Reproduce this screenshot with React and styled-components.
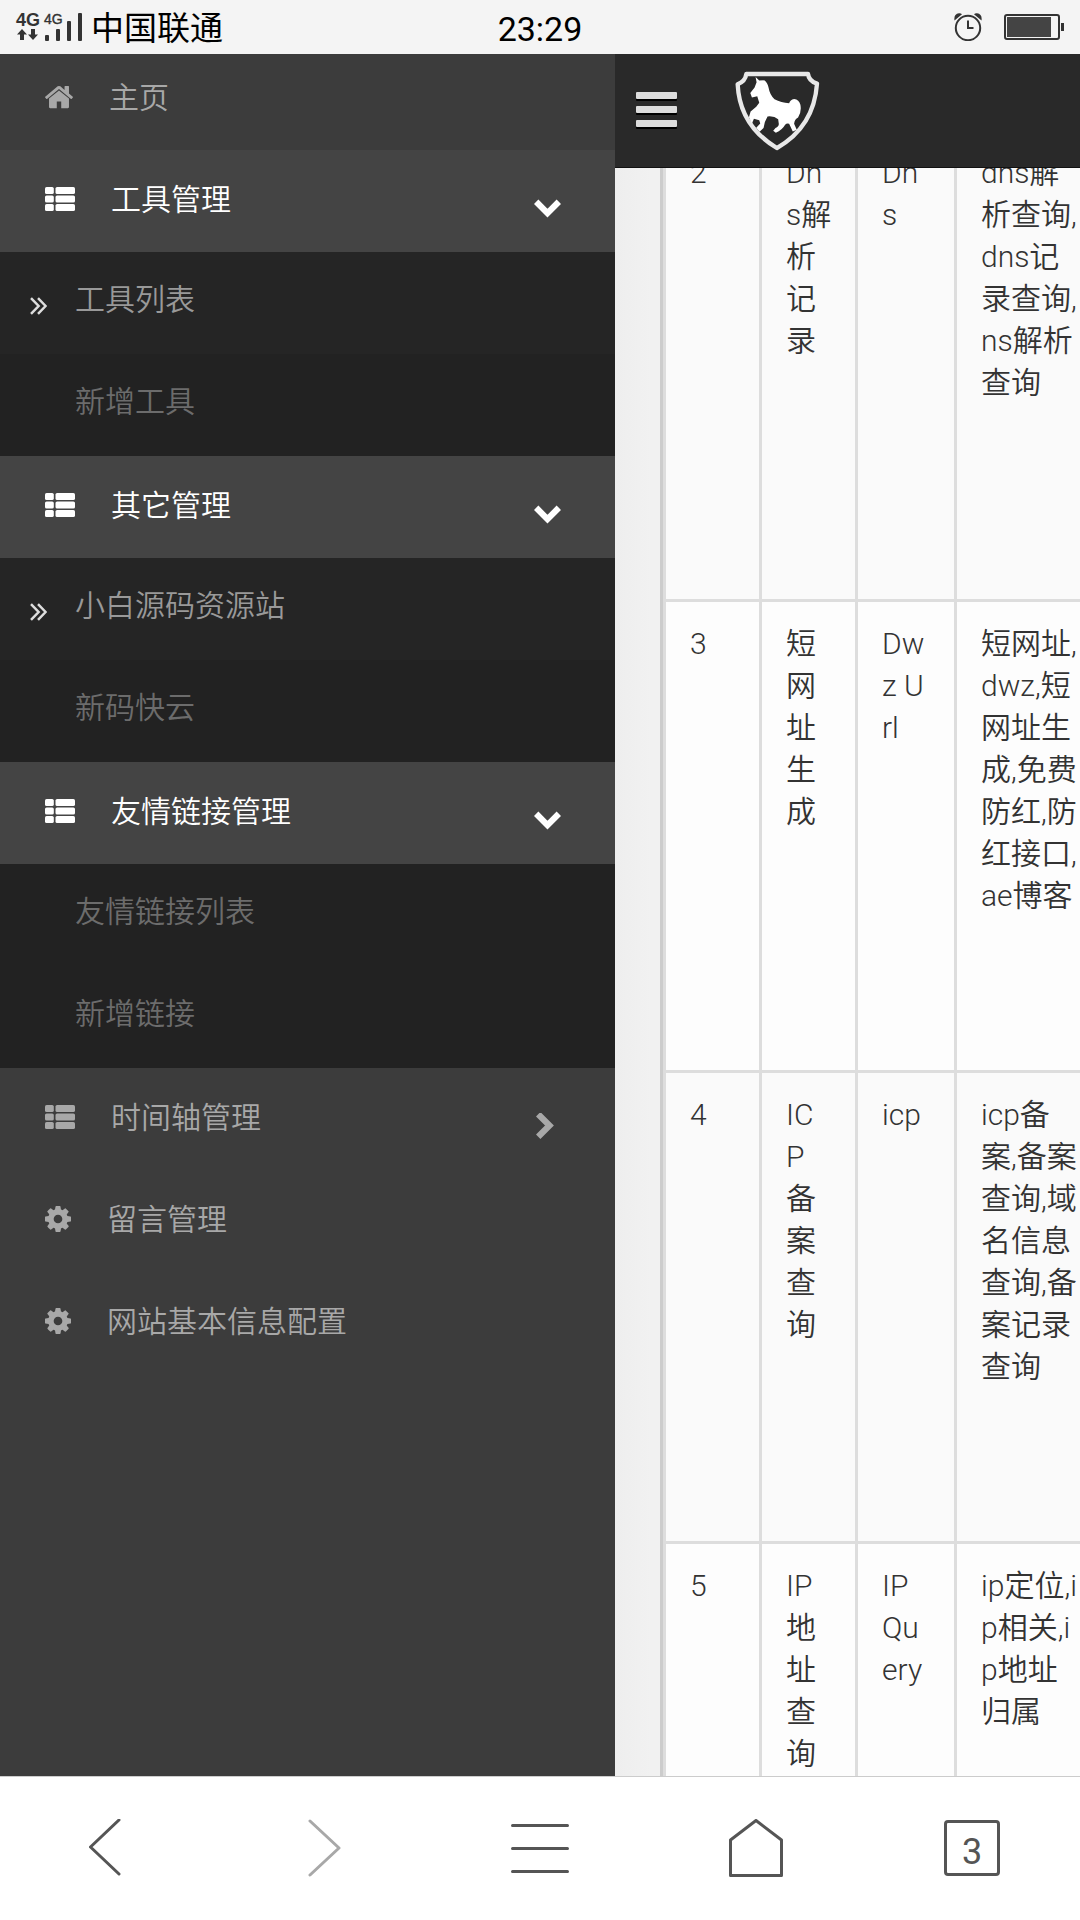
import React, { useState } from 'react';
import styled, { createGlobalStyle } from 'styled-components';

const GlobalStyle = createGlobalStyle`
	* {
		box-sizing: border-box;
	}
	body {
		margin: 0;
		background: #fff;
		font-family: Roboto, 'Noto Sans CJK SC', sans-serif;
		font-size: 30px;
		font-weight: 350;
		line-height: 42px;
		color: #333;
	}
	button {
		padding: 0;
		border: 0;
		background: none;
		font: inherit;
		color: inherit;
		text-align: left;
		cursor: pointer;
	}
	a {
		color: inherit;
		text-decoration: none;
	}
	svg {
		display: block;
		flex: none;
	}
`;

const Page = styled.div`
	display: flex;
	flex-direction: column;
	height: 100vh;
	overflow: hidden;
`;

const StatusBar = styled.header`
	display: grid;
	grid-template-columns: 1fr auto 1fr;
	align-items: center;
	height: 54px;
	padding: 0 16px;
	background: #f4f4f4;
	color: #000;
`;
const Carrier = styled.div`
	display: flex;
	align-items: center;
	gap: 8px;
	font-size: 33px;
	font-weight: 400;
`;
const CarrierName = styled.span`
	padding-top: 4px;
`;
const Clock = styled.time`
	padding-top: 4px;
	font-size: 34px;
	font-weight: 400;
`;
const StatusIcons = styled.div`
	display: flex;
	align-items: center;
	justify-content: flex-end;
	gap: 22px;
`;

const Body = styled.div`
	display: grid;
	grid-template-columns: 615px 1fr;
	flex: 1;
	min-height: 0;
`;

const Sidebar = styled.nav`
	overflow: hidden;
	background: #3c3c3c;
	color: #a8a8a8;
`;
const MenuList = styled.ul`
	margin: -6px 0 0;
	padding: 0;
	list-style: none;
`;
const SubList = styled.ul`
	margin: 0;
	padding: 0;
	list-style: none;
	background: #222;
	color: #6c6c6c;
`;
const MenuRow = styled.a`
	display: flex;
	align-items: center;
	gap: 36px;
	width: 100%;
	height: 102px;
	padding: 0 54px 4px 45px;
	background: ${p => (p.$open ? '#444' : 'transparent')};
	color: ${p => (p.$open ? '#fff' : 'inherit')};
`;
const MenuLabel = styled.span`
	padding-top: 2px;
`;
const ArrowSlot = styled.span`
	margin-left: auto;
	padding-top: 18px;
`;
const SubRow = styled.a`
	display: flex;
	align-items: center;
	height: 102px;
	padding: 0 0 7px 30px;
	background: ${p => (p.$marked ? '#252525' : 'transparent')};
	color: ${p => (p.$marked ? '#999' : 'inherit')};
`;
const Marker = styled.span`
	width: 45px;
	padding-top: 12px;
	color: #ddd;
`;

const Main = styled.main`
	display: flex;
	flex-direction: column;
	min-width: 0;
	min-height: 0;
`;
const TopBar = styled.div`
	display: flex;
	align-items: center;
	flex: none;
	gap: 57px;
	height: 114px;
	padding-left: 21px;
	border-bottom: 1px solid #111;
	background: #292929;
`;
const Toggle = styled.button`
	display: flex;
	flex-direction: column;
	gap: 7px;
	width: 41px;
	padding-bottom: 2px;
`;
const ToggleBar = styled.span`
	height: 7px;
	border-radius: 1px;
	background: #ddd;
	box-shadow: 0 2px 0 #000;
`;
const Content = styled.div`
	flex: 1;
	min-height: 0;
	padding-left: 45px;
	overflow: hidden;
	background: linear-gradient(to right, #eee, #f1f1f1 36px);
`;
const ToolTable = styled.table`
	width: 600px;
	margin-top: -37px;
	border-left: 3px solid #ccc;
	border-collapse: separate;
	border-spacing: 0;
	table-layout: fixed;
`;
const Row = styled.tr`
	height: 471px;
	background: #fafafa;

	&:nth-child(even) {
		background: #fdfdfd;
	}
`;
const Cell = styled.td`
	width: ${p => p.$width}px;
	padding: 21px 0 24px 24px;
	border-left: 3px solid #ddd;
	border-bottom: 3px solid #ddd;
	vertical-align: top;
	white-space: pre;
`;

const BottomBar = styled.nav`
	display: grid;
	grid-template-columns: repeat(5, 1fr);
	flex: none;
	height: 144px;
	padding-bottom: 2px;
	border-top: 1px solid #ccc;
	background: #fff;
	color: #555;
`;
const BottomButton = styled.button`
	display: flex;
	align-items: center;
	justify-content: center;
	color: ${p => (p.disabled ? '#a8a8a8' : '#555')};
`;
const TabCount = styled.span`
	width: 56px;
	height: 56px;
	padding-top: 8px;
	border: 3px solid #555;
	border-radius: 4px;
	font-size: 36px;
	font-weight: 400;
	text-align: center;
`;

const HomeIcon = () => (
	<svg width="28" height="24" viewBox="24 200 1616 1385" fill="currentColor">
		<path d="M1408 992v480q0 26-19 45t-45 19h-384v-384h-256v384h-384q-26 0-45-19t-19-45v-480q0-1 .5-3t.5-3l575-474 575 474q1 2 1 6zm223-69l-62 74q-8 9-21 11h-3q-13 0-21-7l-692-577-692 577q-12 8-24 7-13-2-21-11l-62-74q-8-10-7-23.5t11-21.5l719-599q32-26 76-26t76 26l244 204v-195q0-14 9-23t23-9h192q14 0 23 9t9 23v408l219 182q10 8 11 21.5t-7 23.5z" />
	</svg>
);

const ListIcon = () => (
	<svg width="30" height="24" viewBox="0 0 30 24" fill="currentColor">
		{[0, 8.5, 17].map(y => (
			<React.Fragment key={y}>
				<rect x="0" y={y} width="8.8" height="7" rx="1.6" />
				<rect x="10.5" y={y} width="19.5" height="7" rx="1.6" />
			</React.Fragment>
		))}
	</svg>
);

const CogIcon = () => (
	<svg width="26" height="26" viewBox="0 128 1536 1536" fill="currentColor">
		<path d="M1024 896q0-106-75-181t-181-75-181 75-75 181 75 181 181 75 181-75 75-181zm512-109v222q0 12-8 23t-20 13l-185 28q-19 54-39 91 35 50 107 138 10 12 10 25t-9 23q-27 37-99 108t-94 71q-12 0-26-9l-138-108q-44 23-91 38-16 136-29 186-7 28-36 28h-222q-14 0-24.5-8.5t-11.5-21.5l-28-184q-49-16-90-37l-141 107q-10 9-25 9-14 0-25-11-126-114-165-168-7-10-7-23 0-12 8-23 15-21 51-66.5t54-70.5q-27-50-41-99l-183-27q-13-2-21-12.5t-8-23.5v-222q0-12 8-23t19-13l186-28q14-46 39-92-40-57-107-138-10-12-10-24 0-10 9-23 26-36 98.5-107.5t94.5-71.5q13 0 26 10l138 107q44-23 91-38 16-136 29-186 7-28 36-28h222q14 0 24.5 8.5t11.5 21.5l28 184q49 16 90 37l142-107q9-9 24-9 13 0 25 10 129 119 165 170 7 8 7 22 0 12-8 23-15 21-51 66.5t-54 70.5q26 50 41 98l183 28q13 2 21 12.5t8 23.5z" />
	</svg>
);

const Chevron = ({ open }) => (
	<svg width="27" height="27" viewBox="0 0 27 27" fill="none" stroke="currentColor" strokeWidth="6.2">
		<path d={open ? 'M2.2 6.8L13.5 18.1L24.8 6.8' : 'M4.2 2.2L15.5 13.5L4.2 24.8'} transform={open ? undefined : 'translate(0 -1)'} />
	</svg>
);

const DoubleAngle = () => (
	<svg width="17" height="18" viewBox="0 0 17 18" fill="none" stroke="currentColor" strokeWidth="2.5">
		<path d="M1 1.2L8.6 9L1 16.8M8 1.2L15.6 9L8 16.8" />
	</svg>
);

const SignalIcon = () => (
	<svg
		width="67"
		height="30"
		viewBox="0 0 67 30"
		overflow="visible"
		fill="#333"
		fontFamily="Liberation Sans, sans-serif"
		fontWeight="700"
	>
		<text x="0" y="14" fontSize="18">
			4G
		</text>
		<text x="28" y="12" fontSize="14" fontWeight="400" stroke="#333" strokeWidth=".4">
			4G
		</text>
		<path d="M6 17L11 22.500H8V28H4V22.500H1ZM17 28L12 22.500H15V17H19V22.500H22Z" />
		<rect x="29" y="23" width="4" height="6" rx="1" />
		<rect x="40" y="17" width="4" height="12" rx="1" />
		<rect x="51" y="9" width="4" height="20" rx="1" />
		<rect x="62" y="1" width="4" height="28" rx="1" />
	</svg>
);

const AlarmIcon = () => (
	<svg width="28" height="28" viewBox="0 0 28 28" fill="none" stroke="#333" strokeWidth="2">
		<path d="M.5 7.500Q-.5 1 5 .3Q7 .2 8 1.300ZM27.500 7.500Q28.500 1 23 .3Q21 .2 20 1.300Z" fill="#333" stroke="none" />
		<circle cx="14" cy="15" r="12.2" />
		<path d="M14 7.500V15H19.500" />
	</svg>
);

const BatteryIcon = () => (
	<svg width="60" height="26" viewBox="0 0 60 26" fill="#444">
		<rect x="1" y="1" width="54" height="24" rx="2" fill="none" stroke="#333" strokeWidth="2" />
		<rect x="3" y="3" width="44" height="20" />
		<rect x="57" y="9" width="3" height="8" fill="#333" />
	</svg>
);

// white horse on a shield
const Logo = () => (
	<svg width="87" height="83" viewBox="372 60 260 250">
		<path
			d="M408 75H594Q596 96 621 104Q612 234 500 298Q388 230 382 106Q405 97 408 75Z"
			fill="none"
			stroke="#e8e8e8"
			strokeWidth="13"
			strokeLinejoin="round"
		/>
		<path
			d="M436 84L447 95L462 94Q472 101 475 116Q479 139 493 151Q513 162 537 163Q540 152 552 150Q567 151 571 168Q575 190 564 206Q554 210 552 225L560 243L548 248L537 225Q530 222 525 228Q516 244 497 252L489 246L496 238Q506 234 506 226L504 211Q492 201 472 203L464 220L460 238L448 249L438 237L450 224L447 214L431 210L425 224L416 205L421 188L438 174L447 162L441 142L425 146L420 132L433 116L439 100Z"
			fill="#fff"
		/>
	</svg>
);

const menu = [
	{ label: '主页', icon: HomeIcon },
	{
		label: '工具管理',
		icon: ListIcon,
		open: true,
		children: [{ label: '工具列表', marked: true }, { label: '新增工具' }]
	},
	{
		label: '其它管理',
		icon: ListIcon,
		open: true,
		children: [{ label: '小白源码资源站', marked: true }, { label: '新码快云' }]
	},
	{
		label: '友情链接管理',
		icon: ListIcon,
		open: true,
		children: [{ label: '友情链接列表' }, { label: '新增链接' }]
	},
	{ label: '时间轴管理', icon: ListIcon, children: [] },
	{ label: '留言管理', icon: CogIcon },
	{ label: '网站基本信息配置', icon: CogIcon }
];

const tools = [
	['2', 'Dn\ns解\n析\n记\n录', 'Dn\ns', 'dns解\n析查询,\ndns记\n录查询,\nns解析\n查询'],
	['3', '短\n网\n址\n生\n成', 'Dw\nz U\nrl', '短网址,\ndwz,短\n网址生\n成,免费\n防红,防\n红接口,\nae博客'],
	['4', 'IC\nP\n备\n案\n查\n询', 'icp', 'icp备\n案,备案\n查询,域\n名信息\n查询,备\n案记录\n查询'],
	['5', 'IP\n地\n址\n查\n询', 'IP\nQu\nery', 'ip定位,i\np相关,i\np地址\n归属']
];
const widths = [96, 96, 99, 306];

const MenuItem = ({ item }) => {
	const [open, setOpen] = useState(Boolean(item.open));
	const Icon = item.icon;

	if (!item.children) {
		return (
			<li>
				<MenuRow href="#">
					<Icon />
					<MenuLabel>{item.label}</MenuLabel>
				</MenuRow>
			</li>
		);
	}

	return (
		<li>
			<MenuRow as="button" type="button" $open={open} aria-expanded={open} onClick={() => setOpen(!open)}>
				<Icon />
				<MenuLabel>{item.label}</MenuLabel>
				<ArrowSlot>
					<Chevron open={open} />
				</ArrowSlot>
			</MenuRow>
			{open && (
				<SubList>
					{item.children.map(child => (
						<li key={child.label}>
							<SubRow href="#" $marked={child.marked}>
								<Marker>{child.marked && <DoubleAngle />}</Marker>
								{child.label}
							</SubRow>
						</li>
					))}
				</SubList>
			)}
		</li>
	);
};

const App = () => (
	<Page>
		<GlobalStyle />
		<StatusBar>
			<Carrier>
				<SignalIcon />
				<CarrierName>中国联通</CarrierName>
			</Carrier>
			<Clock>23:29</Clock>
			<StatusIcons>
				<AlarmIcon />
				<BatteryIcon />
			</StatusIcons>
		</StatusBar>
		<Body>
			<Sidebar>
				<MenuList>
					{menu.map(item => (
						<MenuItem key={item.label} item={item} />
					))}
				</MenuList>
			</Sidebar>
			<Main>
				<TopBar>
					<Toggle type="button" aria-label="菜单">
						<ToggleBar />
						<ToggleBar />
						<ToggleBar />
					</Toggle>
					<a href="#" aria-label="首页">
						<Logo />
					</a>
				</TopBar>
				<Content>
					<ToolTable>
						<tbody>
							{tools.map(tool => (
								<Row key={tool[0]}>
									{tool.map((text, i) => (
										<Cell key={i} $width={widths[i]}>
											{text}
										</Cell>
									))}
								</Row>
							))}
						</tbody>
					</ToolTable>
				</Content>
			</Main>
		</Body>
		<BottomBar>
			<BottomButton type="button" aria-label="后退">
				<svg width="38" height="58" viewBox="0 0 38 58" fill="none" stroke="currentColor" strokeWidth="3" strokeLinecap="round" strokeLinejoin="round">
					<path d="M30 1L1.500 28L30 55" />
				</svg>
			</BottomButton>
			<BottomButton type="button" aria-label="前进" disabled>
				<svg width="34" height="58" viewBox="0 0 34 58" fill="none" stroke="currentColor" strokeWidth="3" strokeLinecap="round" strokeLinejoin="round">
					<path d="M3 2L32 29L3 56" />
				</svg>
			</BottomButton>
			<BottomButton type="button" aria-label="菜单">
				<svg width="58" height="50" viewBox="0 0 58 50" fill="none" stroke="currentColor" strokeWidth="3" strokeLinecap="round">
					<path d="M1.500 2.500H56.500M1.500 25.500H56.500M1.500 48.500H56.500" />
				</svg>
			</BottomButton>
			<BottomButton type="button" aria-label="主页">
				<svg width="54" height="58" viewBox="0 0 54 58" fill="none" stroke="currentColor" strokeWidth="3" strokeLinejoin="round">
					<path d="M27 1.500L52.500 21V56.500H1.500V21Z" />
				</svg>
			</BottomButton>
			<BottomButton type="button" aria-label="标签页 3">
				<TabCount>3</TabCount>
			</BottomButton>
		</BottomBar>
	</Page>
);

export default App;
